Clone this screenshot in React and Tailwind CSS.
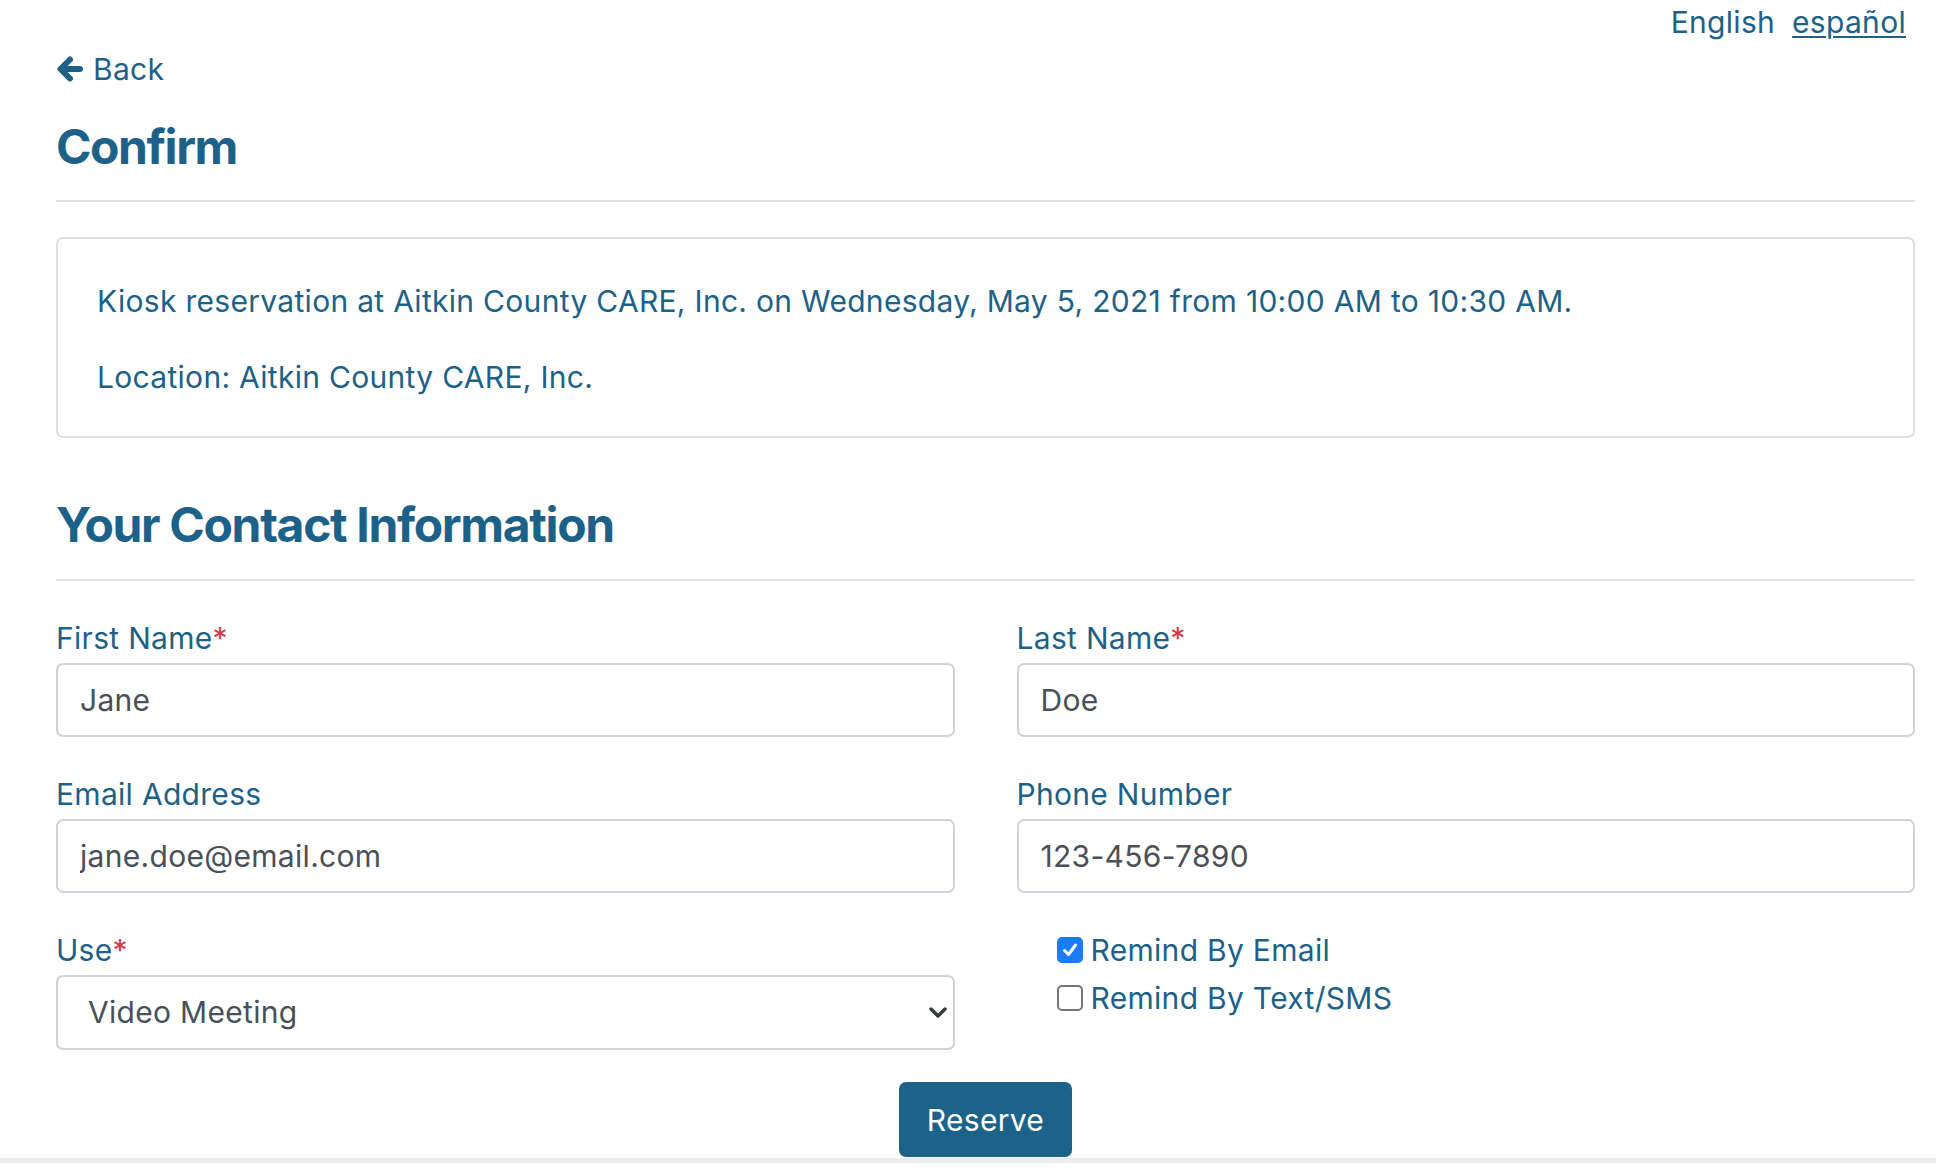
const blue = "text-[#1d6189]";

const Label = ({ text, required }) => (
  <label className={`block leading-[36px] ${blue}`}>
    {text}
    {required && <span className="text-[#dc3545]">*</span>}
  </label>
);

const Field = ({ label, required, value }) => (
  <div>
    <Label text={label} required={required} />
    <input
      defaultValue={value}
      className="mt-[7px] block w-full h-[74px] rounded-[7px] border-2 border-[#ced4da] bg-white pl-[22px] text-[30px] tracking-[0.01em] text-[#495057] outline-none"
    />
  </div>
);

const Check = ({ checked, text }) => (
  <div className="flex items-center h-[48px]">
    {checked ? (
      <span className="w-[26px] h-[26px] rounded-[5px] bg-[#1a7cf5] flex items-center justify-center">
        <svg width="18" height="18" viewBox="0 0 18 18">
          <path d="M3.5 9.5 L7.5 13.5 L14.5 4" fill="none" stroke="white" strokeWidth="3" strokeLinecap="round" strokeLinejoin="round" />
        </svg>
      </span>
    ) : (
      <span className="w-[26px] h-[26px] rounded-[5px] border-2 border-[#767676] bg-white" />
    )}
    <span className={`ml-[8px] ${blue}`}>{text}</span>
  </div>
);

export default function App() {
  return (
    <div className="min-h-screen bg-white font-['Inter',sans-serif] text-[30px] tracking-[0.01em]">
      <div className="pl-[56px] pr-[21px]">
        {/* language links */}
        <div className={`flex justify-end gap-[17px] pt-[4px] pr-[9px] leading-[36px] ${blue}`}>
          <span>English</span>
          <a href="#" className="underline decoration-2 underline-offset-[3px]">español</a>
        </div>

        <a href="#" className={`mt-[11px] flex items-center gap-[9px] leading-[36px] ${blue}`}>
          <svg width="28" height="28" viewBox="0 0 28 28">
            <path d="M24 14 H6 M14 4.5 L4.5 14 L14 23.5" fill="none" stroke="currentColor" strokeWidth="6" strokeLinecap="round" strokeLinejoin="round" />
          </svg>
          <span>Back</span>
        </a>

        <h1 className={`mt-[32px] text-[48px] font-bold leading-[56px] tracking-[-0.03em] ${blue}`}>Confirm</h1>
        <hr className="mt-[25px] border-t-2 border-[#e3e3e3]" />

        <div className={`mt-[35px] rounded-[7px] border-2 border-[#dfdfdf] pl-[39px] pt-[44px] pb-[41px] leading-[36px] ${blue}`}>
          <p>Kiosk reservation at Aitkin County CARE, Inc. on Wednesday, May 5, 2021 from 10:00 AM to 10:30 AM.</p>
          <p className="mt-[40px]">Location: Aitkin County CARE, Inc.</p>
        </div>

        <h2 className={`mt-[59px] text-[48px] font-bold leading-[56px] tracking-[-0.028em] ${blue}`}>Your Contact Information</h2>
        <hr className="mt-[26px] border-t-2 border-[#e3e3e3]" />

        <div className="mt-[39px] grid grid-cols-2 gap-x-[62px] gap-y-[39px]">
          <Field label="First Name" required value="Jane" />
          <Field label="Last Name" required value="Doe" />
          <Field label="Email Address" value="jane.doe@email.com" />
          <Field label="Phone Number" value="123-456-7890" />
          <div>
            <Label text="Use" required />
            <div className="relative mt-[7px]">
              <select
                defaultValue="video"
                className="block w-full h-[75px] appearance-none rounded-[7px] border-2 border-[#ced4da] bg-white pl-[30px] text-[30px] tracking-[0.01em] text-[#495057] outline-none"
              >
                <option value="video">Video Meeting</option>
              </select>
              <svg className="absolute right-[7px] top-[32px] pointer-events-none" width="20" height="12" viewBox="0 0 20 12">
                <path d="M3 2 L10 9 L17 2" fill="none" stroke="#343a40" strokeWidth="3.5" strokeLinecap="round" strokeLinejoin="round" />
              </svg>
            </div>
          </div>
          <div className="pl-[40px] -mt-[6px]">
            <Check checked text="Remind By Email" />
            <Check text="Remind By Text/SMS" />
          </div>
        </div>

        <div className="mt-[32px] flex justify-center">
          <button className="h-[75px] rounded-[7px] bg-[#1d6389] px-[28px] pt-[2px] text-[30px] text-white">Reserve</button>
        </div>
      </div>
      <div className="mt-[1px] border-t-[5px] border-[#ececec]" />
    </div>
  );
}
